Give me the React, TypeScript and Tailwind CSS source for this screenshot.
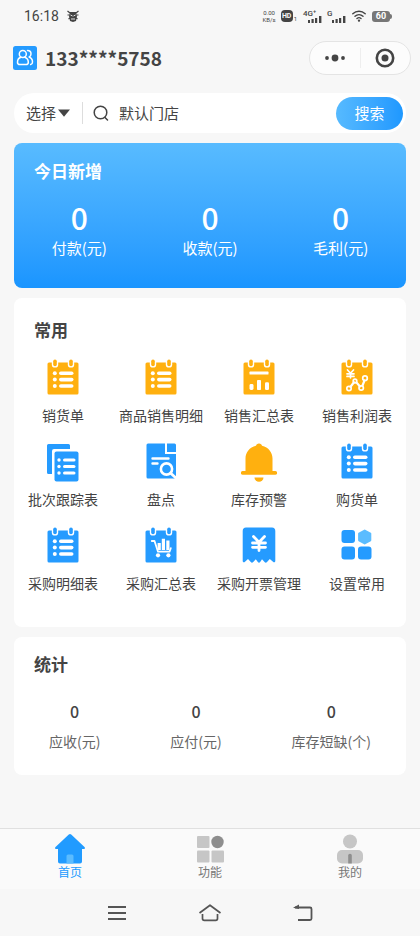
import React from 'react';

const BLUE = '#259bff';
const ORANGE = '#ffb00f';

interface IconProps {
  color?: string;
}

interface CalendarProps extends IconProps {
  children: React.ReactNode;
}

const Calendar: React.FC<CalendarProps> = ({ color = BLUE, children }) => (
  <svg viewBox="0 0 36 36" className="h-9 w-9" aria-hidden="true">
    <rect x="2.5" y="3.5" width="31" height="32" rx="1.5" fill={color} />
    {[10, 26].map((x) => (
      <g key={x}>
        <rect x={x - 3.2} y="-2" width="6.4" height="10.6" rx="3.2" fill="#fff" />
        <rect x={x - 1.8} y="0.4" width="3.6" height="6.8" rx="1.8" fill={color} />
      </g>
    ))}
    {children}
  </svg>
);

const ListIcon: React.FC<IconProps> = ({ color }) => (
  <Calendar color={color}>
    {[14.2, 20.6, 27].map((y) => (
      <g key={y} fill="#fff">
        <circle cx="9.8" cy={y} r="2" />
        <rect x="14" y={y - 1.8} width="14.5" height="3.6" rx="1.8" />
      </g>
    ))}
  </Calendar>
);

const SummaryIcon = () => (
  <Calendar color={ORANGE}>
    <g fill="#fff">
      <rect x="8.5" y="12.6" width="19" height="3" rx="0.6" />
      <rect x="8.5" y="25" width="4" height="6" rx="1.4" />
      <rect x="16" y="21" width="4" height="10" rx="0.8" />
      <rect x="24" y="23.2" width="4" height="7.8" rx="1.2" />
    </g>
  </Calendar>
);

const ProfitIcon = () => (
  <Calendar color={ORANGE}>
    <g fill="none" stroke="#fff" strokeWidth="1.7" strokeLinecap="round" strokeLinejoin="round">
      <path d="M8.5 11l3 3.300 3-3.300M8 14.800h7M8 17.400h7M11.500 14.300v4.500" />
      <path strokeWidth="2.2" d="M11.500 27.800l3.500-4.500M17.500 23.500l3.500 4M23.500 26.500l2-5" />
      <circle cx="10" cy="29.500" r="2.200" />
      <circle cx="16" cy="22" r="1.800" />
      <circle cx="22.200" cy="29" r="2.200" />
      <circle cx="26" cy="19.200" r="2.300" />
    </g>
  </Calendar>
);

const PurchaseSummaryIcon = () => (
  <Calendar>
    <g fill="none" stroke="#fff" strokeLinejoin="round">
      <path strokeWidth="1.8" strokeLinecap="round" d="M8.800 14h2.700l3.500 10.700h11.500l1.300-3.500" />
      <path strokeWidth="3.2" d="M16.200 16v7M20.400 11.800V23M24.900 13.500V23" />
    </g>
    <circle cx="15" cy="28.300" r="2.100" fill="#fff" />
    <circle cx="25.400" cy="28.300" r="2.100" fill="#fff" />
  </Calendar>
);

const BatchIcon = () => (
  <svg viewBox="0 0 36 40" className="h-10 w-9" aria-hidden="true">
    <path d="M3.500 1h20A1.500 1.500 0 0 1 25 2.500V6H9a2 2 0 0 0-2 2v23H3.500A1.500 1.500 0 0 1 2 29.500v-27A1.500 1.500 0 0 1 3.500 1z" fill={BLUE} />
    <rect x="9.500" y="8.500" width="24" height="30" rx="2" fill={BLUE} />
    {[17, 23.5, 30].map((y) => (
      <g key={y} fill="#fff">
        <circle cx="14" cy={y} r="1.7" />
        <rect x="18" y={y - 1.6} width="12.5" height="3.2" rx="1.6" />
      </g>
    ))}
  </svg>
);

const InventoryIcon = () => (
  <svg viewBox="0 0 36 36" className="h-9 w-9" aria-hidden="true">
    <path d="M5 .5h17V11h11v23a1.500 1.500 0 0 1-1.500 1.500H5A1.500 1.500 0 0 1 3.500 34V2A1.500 1.500 0 0 1 5 .5z" fill={BLUE} />
    <path d="M24 .5h7.500A1.500 1.500 0 0 1 33 2v7h-9z" fill={BLUE} />
    <g fill="none" stroke="#fff" strokeLinecap="round">
      <path strokeWidth="2.4" d="M9.500 15.500h16M9.500 20.500h5" />
      <circle cx="23.500" cy="26" r="5.600" fill={BLUE} strokeWidth="2.6" />
      <path strokeWidth="2.8" d="M28 30.500l5 4.500" />
    </g>
  </svg>
);

const BellIcon = () => (
  <svg viewBox="0 0 36 40" className="h-10 w-9" fill={ORANGE} aria-hidden="true">
    <path d="M18 .5c1.800 0 2.500 1 3 2.200C27.500 4 31.500 9.500 31.500 15.500V28h2.700a1.900 1.900 0 0 1 0 3.800H1.800a1.900 1.900 0 0 1 0-3.800h2.700V15.500C4.500 9.500 8.500 4 15 2.700 15.500 1.500 16.200.5 18 .5z" />
    <path d="M13.500 34.500h9a4.500 4.300 0 0 1-9 0z" />
  </svg>
);

const InvoiceIcon = () => (
  <svg viewBox="0 0 36 36" className="h-9 w-9" aria-hidden="true">
    <path d="M5 .5h26A3.500 3.500 0 0 1 34.300 4v30c0 1.400-1.400 1.800-2.300.8L28.800 32l-3 3.200c-.6.6-1.500.6-2 0L21 32.200l-2 3c-.6.6-1.400.6-2 0l-2.200-3-2.800 3c-.6.6-1.500.6-2 0l-3-3.200-3 2.800c-.9 1-2.300.6-2.300-.8V4A3.500 3.500 0 0 1 5 .5z" fill={BLUE} />
    <path d="M12.500 9.500l5.500 5.700 5.500-5.700M11.500 16h13M11.500 20.300h13M18 15.500v8" fill="none" stroke="#fff" strokeWidth="2.8" strokeLinecap="round" />
  </svg>
);

const SettingsIcon = () => (
  <svg viewBox="0 0 36 36" className="h-9 w-9" fill={BLUE} aria-hidden="true">
    <rect x="2.500" y="3" width="13.500" height="13" rx="3" />
    <rect x="2.500" y="19.500" width="13.500" height="13" rx="3" />
    <rect x="19" y="19.500" width="13.500" height="13" rx="3" />
    <path d="M25.700 3.500l5.600 3.200v6.600l-5.600 3.200-5.600-3.200V6.700z" fill="#5bbcff" stroke="#5bbcff" strokeWidth="2" strokeLinejoin="round" />
  </svg>
);

const SignalIcon = () => (
  <svg viewBox="0 0 16 7" className="h-[7px] w-4" fill="#444" aria-hidden="true">
    <rect x="1" y="4" width="2" height="3" />
    <rect x="4.500" y="3" width="2.200" height="4" />
    <rect x="8" y="2" width="2.200" height="5" />
    <rect x="12" y="0" width="2.400" height="7" />
  </svg>
);

const StatusBar = () => (
  <div className="flex h-8 items-center justify-between pl-6 pr-7 font-[Roboto,sans-serif] text-[#444]">
    <div className="flex items-center gap-2">
      <span className="text-sm">16:18</span>
      <svg viewBox="0 0 12 12" className="h-3 w-3" aria-hidden="true">
        <path d="M.5 1l2.500 2M11.500 1L9 3M.5 5h2M11.500 5h-2M1.500 9l1.500-1M10.500 9L9 8" stroke="#444" strokeWidth="1.200" />
        <path d="M3 2h6l1 4-1 5-3 1-3-1-1-5z" fill="#444" />
        <path d="M3.500 5l2 1M8.500 5l-2 1M4 9h4" stroke="#f7f7f7" strokeWidth=".9" />
      </svg>
    </div>
    <div className="flex items-center gap-1">
      <span className="flex flex-col text-center text-[6px] leading-[7px]">
        <span>0.00</span>
        <span>KB/s</span>
      </span>
      <span className="flex items-end gap-px pl-px">
        <span className="flex h-3 w-3 items-center justify-center rounded-sm bg-[#444] text-[7px] font-bold text-[#f7f7f7]">HD</span>
        <span className="text-[6px] leading-[6px]">1</span>
      </span>
      <span className="flex flex-col pl-0.5 text-[8px] font-medium leading-[7px]">
        <span className="h-[6px]">4G⁺</span>
        <span className="pl-1"><SignalIcon /></span>
      </span>
      <span className="flex flex-col text-[8px] font-medium leading-[7px]">
        <span className="h-[6px]">G</span>
        <span className="pl-1"><SignalIcon /></span>
      </span>
      <svg viewBox="0 0 14 12" className="ml-px h-3 w-3.5" fill="none" stroke="#444" strokeWidth="1.400" strokeLinecap="round" aria-hidden="true">
        <path d="M.8 3.800a9 9 0 0 1 12.400 0M3 6.200a6 6 0 0 1 8 0M5 8.500a3 3 0 0 1 4 0" />
        <circle cx="7" cy="10.600" r=".5" fill="#444" />
      </svg>
      <span className="ml-0.5 flex items-center">
        <span className="flex h-[11px] w-[18px] items-center justify-center rounded-[3px] bg-[#777] text-[9px] font-bold leading-[11px] text-white">60</span>
        <span className="h-[5px] w-0.5 rounded-r-sm bg-[#777]" />
      </span>
    </div>
  </div>
);

const Header = () => (
  <header className="flex h-[52px] items-center justify-between pl-[13px] pr-[9px]">
    <div className="flex items-center gap-2">
      <svg viewBox="0 0 24 24" className="h-6 w-6" aria-hidden="true">
        <rect width="24" height="24" rx="2.500" fill={BLUE} />
        <g fill="none" stroke="#fff" strokeWidth="1.500" strokeLinecap="round" strokeLinejoin="round">
          <circle cx="9.800" cy="8" r="3.500" />
          <path d="M7.800 11.200C5.600 12 4.500 14 4.500 16.200c0 1.600 1 2.400 2.400 2.400h6c1.400 0 2.400-.8 2.400-2.400 0-2.200-1.200-4.200-3.500-5M14.500 4.600c2.200 0 3.500 1.400 3.500 3.300 0 1.400-.7 2.400-1.800 3.100 2.300.9 3.300 3 3.300 5 0 1.400-.6 2.400-1.800 2.600" />
        </g>
      </svg>
      <h1 className="text-[19px] font-bold leading-6">133****5758</h1>
    </div>
    <div className="flex h-[34px] w-[102px] items-center rounded-full border border-[#e4e4e4] bg-[#fcfcfc]">
      <button type="button" aria-label="更多" className="flex h-full flex-1 items-center justify-center">
        <svg viewBox="0 0 20 8" className="h-2 w-5" fill="#444" aria-hidden="true">
          <circle cx="2" cy="4" r="1.900" />
          <circle cx="10" cy="4" r="3.400" />
          <circle cx="18" cy="4" r="1.900" />
        </svg>
      </button>
      <span className="h-5 w-px bg-[#eee]" />
      <button type="button" aria-label="关闭" className="flex h-full flex-1 items-center justify-center">
        <svg viewBox="0 0 20 20" className="h-5 w-5" aria-hidden="true">
          <circle cx="10" cy="10" r="8.200" fill="none" stroke="#444" strokeWidth="2.600" />
          <circle cx="10" cy="10" r="3.500" fill="#444" />
        </svg>
      </button>
    </div>
  </header>
);

const SearchBar = () => (
  <form className="flex h-10 items-center rounded-full bg-white pl-3 pr-[3px] text-[15px]" onSubmit={(e) => e.preventDefault()}>
    <div className="relative">
      <select aria-label="选择" className="block w-11 appearance-none bg-transparent leading-6 outline-none">
        <option>选择</option>
      </select>
      <svg viewBox="0 0 12 8" className="pointer-events-none absolute right-0 top-2 h-2 w-3" aria-hidden="true">
        <path d="M0 .5h12L6 7.800z" fill="#444" />
      </svg>
    </div>
    <span className="ml-3 h-[22px] w-px bg-[#ddd]" />
    <svg viewBox="0 0 16 16" className="ml-2.5 h-4 w-4 shrink-0" fill="none" stroke="#444" strokeWidth="1.500" strokeLinecap="round" aria-hidden="true">
      <circle cx="7.500" cy="7.500" r="6.300" />
      <path d="M12 12.500l2.500 2.500" />
    </svg>
    <input type="text" aria-label="门店" defaultValue="默认门店" className="ml-2.5 min-w-0 flex-1 bg-transparent leading-6 outline-none" />
    <button type="submit" className="h-[33px] w-[67px] shrink-0 rounded-full bg-linear-to-r from-[#56baff] to-[#1e98ff] text-white">
      搜索
    </button>
  </form>
);

const TODAY = [
  { label: '付款(元)', value: 0 },
  { label: '收款(元)', value: 0 },
  { label: '毛利(元)', value: 0 },
];

const SHORTCUTS = [
  { label: '销货单', icon: <ListIcon color={ORANGE} /> },
  { label: '商品销售明细', icon: <ListIcon color={ORANGE} /> },
  { label: '销售汇总表', icon: <SummaryIcon /> },
  { label: '销售利润表', icon: <ProfitIcon /> },
  { label: '批次跟踪表', icon: <BatchIcon /> },
  { label: '盘点', icon: <InventoryIcon /> },
  { label: '库存预警', icon: <BellIcon /> },
  { label: '购货单', icon: <ListIcon /> },
  { label: '采购明细表', icon: <ListIcon /> },
  { label: '采购汇总表', icon: <PurchaseSummaryIcon /> },
  { label: '采购开票管理', icon: <InvoiceIcon /> },
  { label: '设置常用', icon: <SettingsIcon /> },
];

const STATS = [
  { label: '应收(元)', value: 0 },
  { label: '应付(元)', value: 0 },
  { label: '库存短缺(个)', value: 0 },
];

const TABS = [
  {
    label: '首页',
    active: true,
    icon: (
      <svg viewBox="0 0 30 30" className="h-[30px] w-[30px]" aria-hidden="true">
        <path d="M13.800.6a1.900 1.900 0 0 1 2.400 0L29.500 13c.8.8.4 2-.7 2H27v12.500a2 2 0 0 1-2 2H5a2 2 0 0 1-2-2V15H1.200C.1 15-.3 13.800.5 13z" fill="#219bff" />
        <path d="M11.500 29.500V22a1.500 1.500 0 0 1 1.500-1.500h4a1.500 1.500 0 0 1 1.500 1.500v7.500z" fill="#5bbcff" />
      </svg>
    ),
  },
  {
    label: '功能',
    active: false,
    icon: (
      <svg viewBox="0 0 30 30" className="h-[30px] w-[30px]" fill="#c6c6c6" aria-hidden="true">
        <rect x="2" y="2" width="12.500" height="12" rx="1" />
        <rect x="2" y="16.500" width="12.500" height="12" rx="1" />
        <rect x="16.500" y="16.500" width="12.500" height="12" rx="1" />
        <circle cx="22.500" cy="8" r="6.200" fill="#8e8e8e" />
      </svg>
    ),
  },
  {
    label: '我的',
    active: false,
    icon: (
      <svg viewBox="0 0 30 30" className="h-[30px] w-[30px]" fill="#c6c6c6" aria-hidden="true">
        <circle cx="15" cy="7.500" r="7" />
        <rect x="2" y="16" width="26" height="13.500" rx="5" />
        <path d="M13.200 29.500v-8a1.800 1.800 0 0 1 3.600 0v8z" fill="#8e8e8e" />
      </svg>
    ),
  },
];

const TabBar = () => (
  <nav className="grid h-[61px] grid-cols-3 border-t border-[#e0e0e0] bg-[#fafafa]">
    {TABS.map((tab) => (
      <button
        key={tab.label}
        type="button"
        className={`flex flex-col items-center pt-[5px] text-xs ${tab.active ? 'text-[#219bff]' : 'text-[#777]'}`}
      >
        {tab.icon}
        {tab.label}
      </button>
    ))}
  </nav>
);

const SystemNav = () => (
  <div className="flex h-[47px] items-center justify-center gap-[71px]">
    <button type="button" aria-label="最近任务">
      <svg viewBox="0 0 20 16" className="h-4 w-5" stroke="#555" strokeWidth="1.800" aria-hidden="true">
        <path d="M1 2h18M1 8h18M1 14h18" />
      </svg>
    </button>
    <button type="button" aria-label="主屏幕">
      <svg viewBox="0 0 24 18" className="h-[18px] w-6" fill="none" stroke="#555" strokeWidth="1.700" strokeLinejoin="round" aria-hidden="true">
        <path d="M1.500 9L12 1.200 22.500 9M4.500 10v4.500a1.800 1.800 0 0 0 1.800 1.800h11.400a1.800 1.800 0 0 0 1.800-1.800V10" />
      </svg>
    </button>
    <button type="button" aria-label="返回">
      <svg viewBox="0 0 20 18" className="h-[18px] w-5" fill="none" stroke="#555" strokeWidth="1.800" aria-hidden="true">
        <path d="M2 3.500h15a1.500 1.500 0 0 1 1.500 1.500v9.500A1.500 1.500 0 0 1 17 16H5" />
        <path d="M6 .5L0 3.800 6 5z" fill="#555" stroke="none" />
      </svg>
    </button>
  </div>
);

export default function App() {
  return (
    <div className="flex min-h-screen flex-col bg-[#f7f7f7] font-['Noto_Sans_CJK_SC',sans-serif] text-[#444]">
      <StatusBar />
      <Header />
      <main className="flex flex-1 flex-col gap-2.5 px-3.5 pt-[9px]">
        <SearchBar />

        <section className="rounded-lg bg-linear-to-b from-[#58bbff] to-[#1995ff] pb-7 pt-4 text-white">
          <h2 className="px-5 text-[17px] font-bold leading-6">今日新增</h2>
          <div className="grid grid-cols-3 pt-4 text-center">
            {TODAY.map((item) => (
              <div key={item.label}>
                <p className="text-[30px] font-medium leading-[37px]">{item.value}</p>
                <p className="text-[15px] leading-6">{item.label}</p>
              </div>
            ))}
          </div>
        </section>

        <section className="rounded-lg bg-white pb-[34px] pt-5">
          <h2 className="px-5 text-[17px] font-bold leading-6">常用</h2>
          <div className="grid grid-cols-4 gap-y-[18px] pt-[17px]">
            {SHORTCUTS.map((item) => (
              <button key={item.label} type="button" className="flex flex-col items-center whitespace-nowrap text-sm">
                <span className="flex h-[46px] items-start justify-center">{item.icon}</span>
                {item.label}
              </button>
            ))}
          </div>
        </section>

        <section className="rounded-lg bg-white pb-6 pt-[15px]">
          <h2 className="px-5 text-[17px] font-bold leading-6">统计</h2>
          <div className="flex justify-around pt-[23px] text-center">
            {STATS.map((item) => (
              <div key={item.label}>
                <p className="text-base font-medium">{item.value}</p>
                <p className="pt-2 text-sm text-[#666]">{item.label}</p>
              </div>
            ))}
          </div>
        </section>
      </main>
      <TabBar />
      <SystemNav />
    </div>
  );
}
